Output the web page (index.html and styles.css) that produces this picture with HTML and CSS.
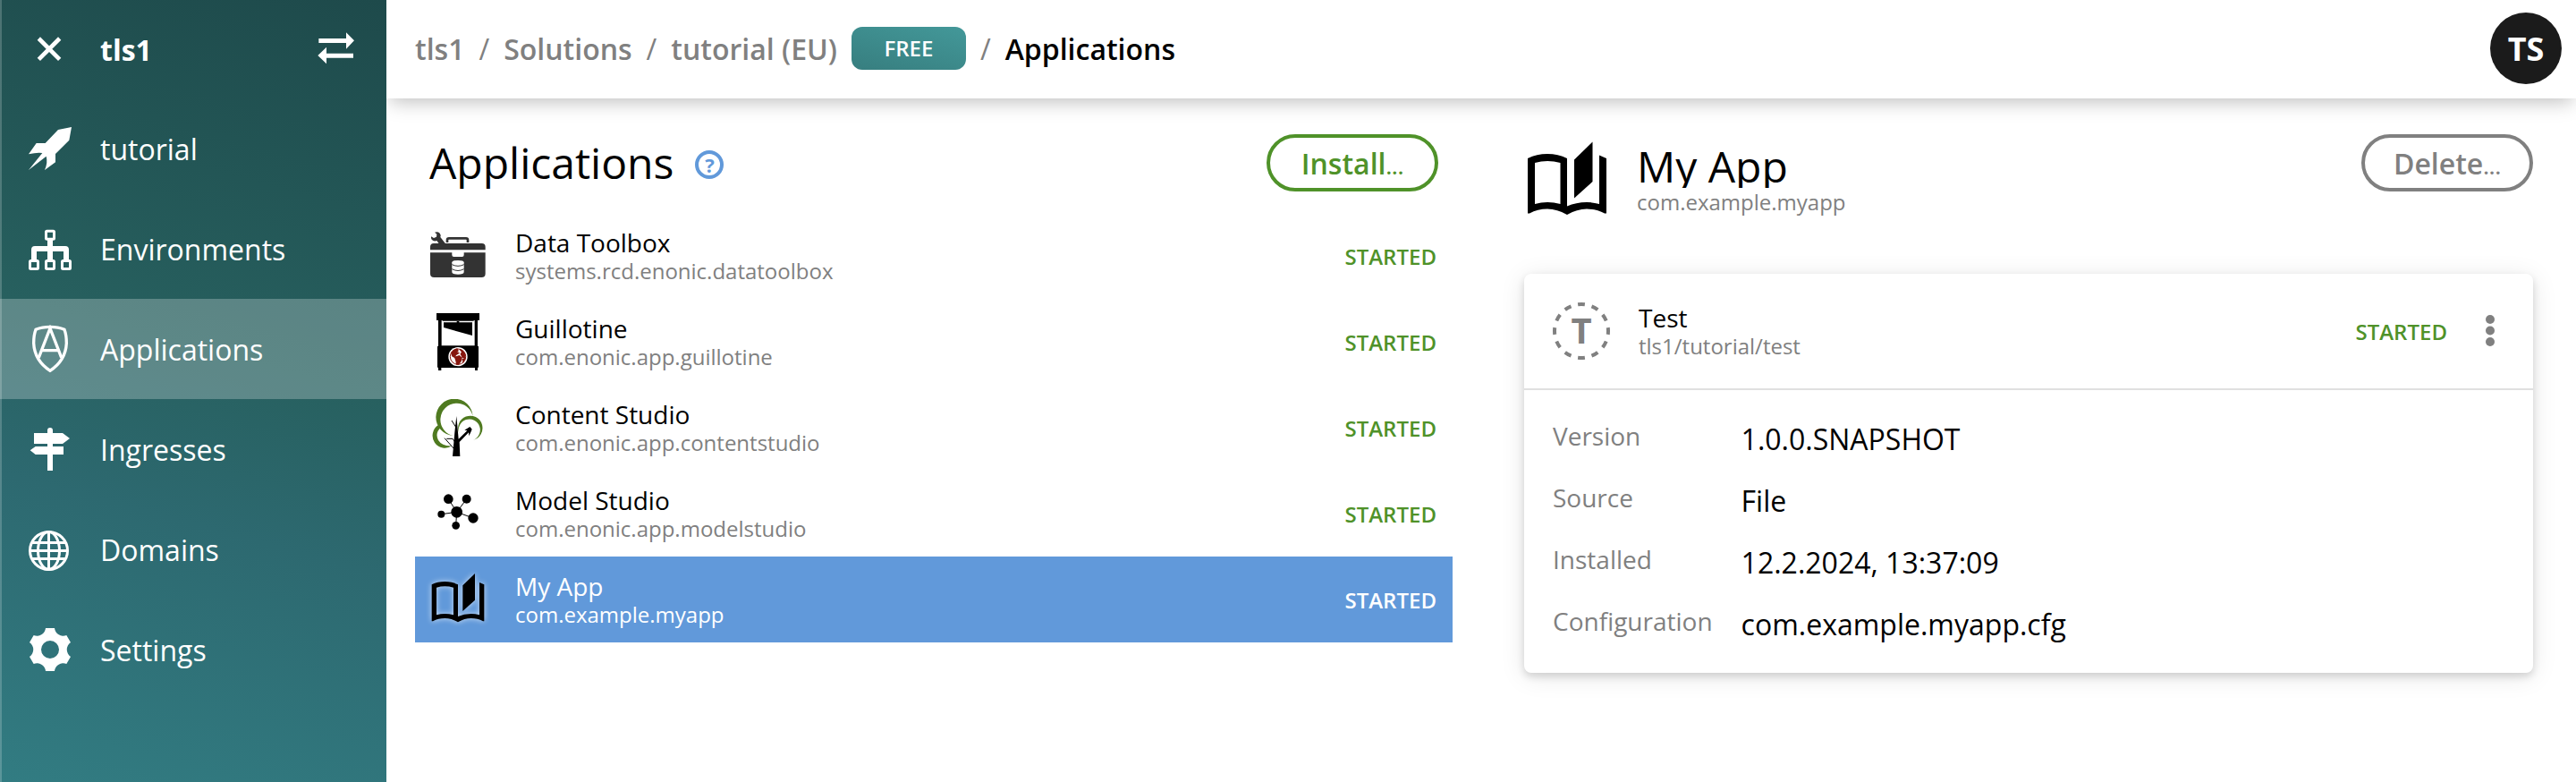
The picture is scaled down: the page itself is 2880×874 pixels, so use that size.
FILE: index.html
```html
<!DOCTYPE html>
<html lang="en">
<head>
<meta charset="utf-8">
<meta name="viewport" content="width=device-width, initial-scale=1">
<title>Applications</title>
<link rel="stylesheet" href="styles.css">
</head>
<body>
<svg class="defs" aria-hidden="true">
  <symbol id="book" viewBox="60 594 192 192">
    <path fill-rule="evenodd" d="M68 640Q88 630 112 630Q136 630 156 640V747Q176 738 200 738Q214 738 228 742V633L244 640V763L240 763Q222 753 200 753Q178 753 156 766Q134 753 112 753Q90 753 72 763L68 763ZM84 650V742Q112 734 141 742V650Q112 642 84 650Z"/>
    <path d="M172 643L213 603V692L172 729Z"/>
  </symbol>
</svg>
<div class="app">
  <aside class="sidebar">
    <div class="side-head">
      <button class="icon-btn" type="button" aria-label="Close menu">
        <svg class="icon" viewBox="96 93 144 144"><path d="M130 129L200 199M200 129L130 199" fill="none" stroke="#fff" stroke-width="14"/></svg>
      </button>
      <span class="side-title">tls1</span>
      <button class="icon-btn" type="button" aria-label="Switch organization">
        <svg class="icon" viewBox="1056 93 144 144"><path d="M1069 129H1161V109L1188 136L1161 164V144H1069ZM1185 179H1095V158L1066 186L1095 214V194H1185Z"/></svg>
      </button>
    </div>
    <nav class="nav">
      <a class="nav-item" href="#">
        <svg class="icon" viewBox="96 426 144 144"><path d="M240 426L232 470L186 516V544L150 570Q161 545 155 524L96 570L142 513Q125 510 96 517L122 480H152L195 435Z"/></svg>
        <span>tutorial</span>
      </a>
      <a class="nav-item" href="#">
        <svg class="icon" viewBox="96 762 144 144"><g fill="none" stroke="#fff" stroke-width="9"><rect x="154.500" y="774.500" width="27" height="27" rx="3"/><rect x="100.500" y="874.500" width="27" height="27" rx="3"/><rect x="154.500" y="874.500" width="27" height="27" rx="3"/><rect x="208.500" y="874.500" width="27" height="27" rx="3"/></g><path d="M159 804H177V825H219Q231 825 231 837V872H213V843H177V872H159V843H123V872H105V837Q105 825 117 825H159Z"/></svg>
        <span>Environments</span>
      </a>
      <a class="nav-item active" href="#" aria-current="page">
        <svg class="icon tall" viewBox="96 1088 144 162"><g fill="none" stroke="#fff" stroke-width="10"><path d="M168 1095Q195 1095 216 1104Q223 1122 223 1150Q220 1208 168 1242Q116 1208 113 1150Q113 1122 120 1104Q141 1095 168 1095Z"/><path d="M130 1198L168 1100L206 1198M142 1174H194"/></g></svg>
        <span>Applications</span>
      </a>
      <a class="nav-item" href="#">
        <svg class="icon" viewBox="96 114 144 144"><path d="M159 132V123Q159 114 168 114Q177 114 177 123V132H210L234 150L210 168H177V177H213V204H177V258H159V204H119L101 190L119 177H159V168H114V132Z"/></svg>
        <span>Ingresses</span>
      </a>
      <a class="nav-item" href="#">
        <svg class="icon" viewBox="96 450 144 144"><g fill="none" stroke="#fff" stroke-width="9"><circle cx="163.500" cy="526.500" r="63"/><ellipse cx="163.500" cy="526.500" rx="36" ry="63"/><path d="M163.500 464V589M103 526.500H224M108 499.500H219M108 553.500H219"/></g></svg>
        <span>Domains</span>
      </a>
      <a class="nav-item" href="#">
        <svg class="icon" viewBox="96 786 144 144"><path fill-rule="evenodd" d="M153 786H183A29 29 0 0 0 223 810L237 834A29 29 0 0 0 237 882L223 906A29 29 0 0 0 183 930H153A29 29 0 0 0 113 906L99 882A29 29 0 0 0 99 834L113 810A29 29 0 0 0 153 786ZM168 828A30 30 0 1 0 168 888A30 30 0 1 0 168 828Z"/></svg>
        <span>Settings</span>
      </a>
    </nav>
  </aside>

  <div class="main">
    <header class="topbar">
      <nav class="crumbs" aria-label="Breadcrumb">
        <a href="#">tls1</a><span class="sep">/</span>
        <a href="#">Solutions</a><span class="sep">/</span>
        <a href="#">tutorial (EU)</a><span class="badge">FREE</span><span class="sep">/</span>
        <a class="current" href="#" aria-current="page">Applications</a>
      </nav>
      <button class="avatar" type="button">TS</button>
    </header>

    <main class="columns">
      <section class="list-pane">
        <div class="pane-head">
          <h1 class="title">Applications</h1>
          <button class="help" type="button" aria-label="Help">?</button>
          <button class="btn primary" type="button">Install<span class="dots">...</span></button>
        </div>
        <ul class="apps">
          <li><a class="app-row" href="#">
            <svg class="app-icon" viewBox="60 72 192 192" fill="#333">
              <path d="M63 148V138Q63 126 75 126H236Q248 126 248 138V148ZM63 157H136V165Q136 171 142 171H170Q176 171 176 165V157H248V227Q248 240 235 240H76Q63 240 63 227Z"/>
              <path d="M120 123V115Q120 109 126 109H183Q189 109 189 115V123" fill="none" stroke="#333" stroke-width="8"/>
              <path d="M78 89Q88 85 95 92Q100 98 97 105L114 127H92L85 117Q75 121 68 113Q65 109 66 103L75 108L84 104L85 95Z"/>
              <path d="M136 190Q136 183 156 183Q176 183 176 190V222Q176 230 156 230Q136 230 136 222Z" fill="#fff"/>
              <path d="M136 197Q156 207 176 197M136 212Q156 223 176 212" fill="none" stroke="#333" stroke-width="3"/>
            </svg>
            <span class="names"><span class="name">Data Toolbox</span><span class="key">systems.rcd.enonic.datatoolbox</span></span>
            <span class="status">STARTED</span>
          </a></li>
          <li><a class="app-row" href="#">
            <svg class="app-icon" viewBox="60 360 192 192">
              <path d="M84 360H228V384H222V471H225V542H222V552H213V543H100V552H90V542H87V471H90V384H84ZM101 384V469H212V384Z" fill-rule="evenodd"/>
              <path d="M104 385H209V387H160V391H204V435L108 408V391H152V387H104Z"/>
              <circle cx="156" cy="506" r="32" fill="#fff"/>
              <circle cx="156" cy="506" r="26" fill="none" stroke="#86170f" stroke-width="3"/>
              <path d="M134 493Q142 482 153 480L156 486L150 490L158 494L148 500L145 508L138 504ZM163 482Q176 487 180 500L179 510L172 508L166 497L170 490ZM146 508L160 503L168 510L166 520L158 531H152L150 520ZM172 515L179 513L174 523Z" fill="#86170f" stroke="#86170f" stroke-width="4"/>
            </svg>
            <span class="names"><span class="name">Guillotine</span><span class="key">com.enonic.app.guillotine</span></span>
            <span class="status">STARTED</span>
          </a></li>
          <li><a class="app-row" href="#">
            <svg class="app-icon" viewBox="60 18 192 192">
              <g fill="#4f7a20"><path d="M206 76A62 62 0 1 0 140 141A55 55 0 1 1 206 76Z"/><path d="M160 132A41 41 0 1 1 207 155A36 36 0 1 0 160 132Z"/><path d="M89 106A40 40 0 0 0 136 175Q103 177 90 156Q78 132 98 114Z"/></g>
              <path d="M138 210L145 130L151 75L155 118L158 152L187 124L178 122L196 111L203 119L200 127L193 142L192 130L161 162L163 210Z"/>
              <path d="M135 90L149 112M111 149L144 186M118 151H138L146 162" fill="none" stroke="#000" stroke-width="3"/>
            </svg>
            <span class="names"><span class="name">Content Studio</span><span class="key">com.enonic.app.contentstudio</span></span>
            <span class="status">STARTED</span>
          </a></li>
          <li><a class="app-row" href="#">
            <svg class="app-icon" viewBox="60 306 192 192">
              <path d="M124 353L152 397L185 353M100 404L152 397L207 417M152 397L149 442" fill="none" stroke="#000" stroke-width="3"/>
              <circle cx="152" cy="397" r="19"/><circle cx="124" cy="353" r="16"/><circle cx="185" cy="353" r="15"/><circle cx="100" cy="404" r="12"/><circle cx="207" cy="417" r="17"/><circle cx="149" cy="442" r="13"/>
            </svg>
            <span class="names"><span class="name">Model Studio</span><span class="key">com.enonic.app.modelstudio</span></span>
            <span class="status">STARTED</span>
          </a></li>
          <li><a class="app-row selected" href="#" aria-current="true">
            <svg class="app-icon"><use href="#book"/></svg>
            <span class="names"><span class="name">My App</span><span class="key">com.example.myapp</span></span>
            <span class="status">STARTED</span>
          </a></li>
        </ul>
      </section>

      <section class="detail-pane">
        <div class="detail-head">
          <svg class="big-icon"><use href="#book"/></svg>
          <div class="names">
            <h2 class="detail-title">My App</h2>
            <span class="key">com.example.myapp</span>
          </div>
          <button class="btn muted" type="button">Delete<span class="dots">...</span></button>
        </div>
        <article class="card">
          <div class="card-head">
            <svg class="app-icon" viewBox="0 0 64 64"><circle cx="32" cy="32" r="30" fill="none" stroke="#808080" stroke-width="4" pathLength="24" stroke-dasharray="1 1" stroke-dashoffset="0.5"/><text class="env-letter" x="32" y="46" text-anchor="middle">T</text></svg>
            <div class="names"><span class="name">Test</span><span class="key">tls1/tutorial/test</span></div>
            <span class="status">STARTED</span>
            <button class="more" type="button" aria-label="More actions">
              <svg class="more-icon" viewBox="0 0 64 64"><circle cx="32" cy="19" r="5"/><circle cx="32" cy="31.500" r="5"/><circle cx="32" cy="44" r="5"/></svg>
            </button>
          </div>
          <dl class="facts">
            <dt>Version</dt><dd>1.0.0.SNAPSHOT</dd>
            <dt>Source</dt><dd>File</dd>
            <dt>Installed</dt><dd>12.2.2024, 13:37:09</dd>
            <dt>Configuration</dt><dd>com.example.myapp.cfg</dd>
          </dl>
        </article>
      </section>
    </main>
  </div>
</div>
</body>
</html>
```
FILE: styles.css
```css
* { box-sizing: border-box; }

body {
  margin: 0;
  font-family: "Open Sans", "Noto Sans", sans-serif;
  font-size: 32px;
  color: #000;
  background: #fff;
}

a { color: inherit; text-decoration: none; }
button { font: inherit; color: inherit; padding: 0; border: 0; background: none; cursor: pointer; }
h1, h2, ul, dl, dd { margin: 0; padding: 0; font-weight: 400; }
ul { list-style: none; }
svg { display: block; flex: none; }
.defs { display: none; }

.app { display: flex; min-height: 100vh; }

/* Sidebar */
.sidebar {
  flex: none;
  width: 432px;
  color: #fff;
  background: linear-gradient(195deg, #1e4a4b, #27605f 45%, #2d6970 65%, #327c82);
  box-shadow: inset 2px 0 rgba(255, 255, 255, .2);
}
.side-head {
  display: flex;
  align-items: center;
  gap: 32px;
  height: 110px;
  padding: 0 32px;
}
.side-title { flex: 1; font-weight: 700; }
.icon { width: 48px; height: 48px; fill: #fff; }
.icon.tall { height: 54px; }
.nav-item {
  display: flex;
  align-items: center;
  gap: 32px;
  height: 112px;
  padding: 0 32px;
  font-weight: 500;
}
.nav-item.active { background: rgba(255, 255, 255, .25); }

/* Top bar */
.main { flex: 1; min-width: 0; }
.topbar {
  display: flex;
  align-items: center;
  justify-content: space-between;
  height: 110px;
  padding: 0 16px 2px 32px;
  box-shadow: 0 8px 20px -4px rgba(0, 0, 0, .25);
  clip-path: inset(0 0 -40px 0);
}
.crumbs {
  display: flex;
  align-items: center;
  gap: 16px;
  font-weight: 600;
  color: #808080;
}
.sep { font-weight: 400; }
.current { color: #000; }
.badge {
  width: 128px;
  height: 48px;
  border-radius: 12px;
  font-size: 24px;
  line-height: 48px;
  text-align: center;
  color: #fff;
  background: linear-gradient(195deg, #439899, #377e7f);
}
.avatar {
  width: 80px;
  height: 80px;
  border-radius: 50%;
  font-size: 36px;
  font-weight: 700;
  color: #fff;
  background: #1b1b1b;
}

/* Panes */
.columns { display: grid; grid-template-columns: 1fr 1fr; }
.list-pane { padding: 40px 32px; }
.detail-pane { padding: 40px 48px; }
.pane-head {
  display: flex;
  align-items: center;
  height: 64px;
  margin-bottom: 24px;
  padding: 0 16px;
}
.title { font-size: 48px; line-height: 66px; }
.help {
  width: 32px;
  height: 32px;
  margin: 4px 0 0 24px;
  border: 4px solid #6199da;
  border-radius: 50%;
  font-size: 22px;
  font-weight: 700;
  line-height: 24px;
  color: #6199da;
}
.btn {
  width: 192px;
  height: 64px;
  margin-left: auto;
  border: 4px solid;
  border-radius: 32px;
  font-weight: 600;
}
.primary { color: #4f9229; }
.muted { color: #808080; }
.dots { font-size: 24px; }

.app-row {
  display: flex;
  align-items: center;
  height: 96px;
  padding: 0 18px 0 16px;
}
.app-icon { width: 64px; height: 64px; }
.names {
  display: flex;
  flex: 1;
  flex-direction: column;
  min-width: 0;
  padding-left: 32px;
}
.name { font-size: 28px; line-height: 34px; }
.key { font-size: 24px; line-height: 30px; color: #808080; }
.status { font-size: 24px; font-weight: 600; color: #4f9229; }
.selected { background: #6199da; color: #fff; }
.selected .key, .selected .status { color: #fff; }
.selected .app-icon { overflow: visible; filter: drop-shadow(0 0 3px rgba(255, 255, 255, .7)); }

/* Detail */
.detail-head {
  display: flex;
  align-items: flex-start;
  margin-bottom: 56px;
}
.big-icon { width: 96px; height: 96px; margin-top: 4px; }
.detail-head .names { padding: 8px 0 0 30px; }
.detail-title { font-size: 48px; line-height: 56px; height: 52px; overflow: hidden; }
.detail-head .key { line-height: 32px; }

.card {
  border-radius: 8px;
  background: #fff;
  box-shadow: 0 4px 8px rgba(0, 0, 0, .14), 0 4px 28px rgba(0, 0, 0, .1);
}
.card-head {
  display: flex;
  align-items: center;
  padding: 32px 16px 32px 32px;
  border-bottom: 2px solid #e0e0e0;
}
.env-letter { font-size: 40px; font-weight: 700; fill: #808080; }
.more { margin-left: 16px; }
.more-icon { width: 64px; height: 64px; fill: #808080; }
.facts {
  display: grid;
  grid-template-columns: max-content 1fr;
  gap: 24px 32px;
  padding: 32px;
}
.facts dt { font-size: 28px; line-height: 38px; color: #808080; }
.facts dd { line-height: 45px; }
```
